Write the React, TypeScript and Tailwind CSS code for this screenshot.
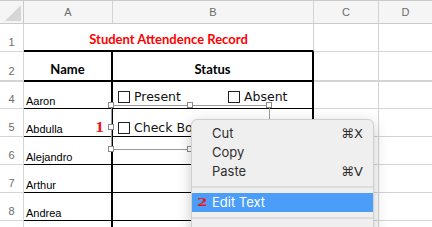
import React from "react";

const Handle = ({ x, y }: { x: string; y: string }) => (
  <div className={`absolute w-[6px] h-[6px] bg-white border border-[#8a8a8a] ${x} ${y}`} />
);

export default function App() {
  const sans = "font-['Liberation_Sans',Arial,sans-serif]";
  return (
    <div className="relative w-[432px] h-[227px] overflow-hidden bg-white">
      {/* Column header row */}
      <div className={`flex h-[24px] border-t border-b border-[#cbcbcb] bg-[#f5f5f5] text-[11px] text-[#6b6b6b] ${sans}`}>
        <div className="relative w-[24px] border-r border-[#cbcbcb]">
          <div className="absolute left-[5px] top-[4px] w-0 h-0 border-l-[16px] border-l-transparent border-b-[16px] border-b-[#d6d6d6]" />
        </div>
        <div className="w-[89px] border-r border-[#d4d4d4] flex items-center justify-center">A</div>
        <div className="w-[201px] border-r border-[#d4d4d4] flex items-center justify-center">B</div>
        <div className="w-[65px] border-r border-[#d4d4d4] flex items-center justify-center">C</div>
        <div className="flex-1 flex items-center justify-center">D</div>
      </div>

      {/* Row 1 */}
      <div className={`flex h-[28px] ${sans}`}>
        <div className="w-[24px] border-r border-b border-[#d4d4d4] flex items-end justify-center pb-[1px] text-[11px] text-[#6b6b6b]">1</div>
        <div className="w-[290px] border-r border-r-[#d4d4d4] border-b-2 border-b-black flex items-end justify-center pb-[1px] text-[13px] font-bold text-[#ff0000] font-['Lato',sans-serif]">
          Student Attendence Record
        </div>
        <div className="w-[65px] border-r border-b border-[#d4d4d4]" />
        <div className="flex-1 border-b border-[#d4d4d4]" />
      </div>

      {/* Row 2 */}
      <div className={`flex h-[30px] ${sans}`}>
        <div className="w-[24px] border-r border-b-2 border-[#d4d4d4] flex items-end justify-center pb-[1px] text-[11px] text-[#6b6b6b]">2</div>
        <div className="w-[89px] border-r-2 border-b-2 border-black flex items-end justify-center pb-[1px] text-[13px] font-bold text-black font-['Lato',sans-serif]">Name</div>
        <div className="w-[201px] border-r-2 border-b-2 border-black flex items-end justify-center pb-[1px] text-[13px] font-bold text-black font-['Lato',sans-serif]">Status</div>
        <div className="w-[65px] border-r border-b-2 border-[#d4d4d4]" />
        <div className="flex-1 border-b-2 border-[#d4d4d4]" />
      </div>

      {[
        { n: "4", name: "Aaron", h: "h-[27px]" },
        { n: "5", name: "Abdulla", h: "h-[28px]" },
        { n: "6", name: "Alejandro", h: "h-[28px]" },
        { n: "7", name: "Arthur", h: "h-[28px]" },
        { n: "8", name: "Andrea", h: "h-[28px]" },
      ].map((r) => (
        <div key={r.n} className={`flex ${r.h} ${sans}`}>
          <div className="w-[24px] border-r border-b border-[#d4d4d4] flex items-end justify-center pb-[1px] text-[11px] text-[#6b6b6b]">{r.n}</div>
          <div className="w-[89px] border-r-2 border-b border-black flex items-end pl-[2px] pb-[0px] text-[11px] text-black leading-[14px]">{r.name}</div>
          <div className="w-[201px] border-r-2 border-b border-black" />
          <div className="w-[65px] border-r border-b border-[#d4d4d4]" />
          <div className="flex-1 border-b border-[#d4d4d4]" />
        </div>
      ))}

      {/* Row 9 */}
      <div className="flex h-[20px]">
        <div className="w-[24px] border-r border-[#d4d4d4]" />
        <div className="w-[89px] border-r-2 border-black" />
        <div className="w-[201px] border-r-2 border-black" />
        <div className="w-[65px] border-r border-[#d4d4d4]" />
        <div className="flex-1" />
      </div>

      {/* Check box controls */}
      <div className="absolute left-[118px] top-[89px] h-[16px] flex items-center gap-[4px] text-[12.5px] text-[#111] font-['DejaVu_Sans',sans-serif]">
        <div className="w-[12px] h-[12px] border border-[#222] bg-white" />
        <span>Present</span>
      </div>
      <div className="absolute left-[228px] top-[89px] h-[16px] flex items-center gap-[4px] text-[12.5px] text-[#111] font-['DejaVu_Sans',sans-serif]">
        <div className="w-[12px] h-[12px] border border-[#222] bg-white" />
        <span>Absent</span>
      </div>
      <div className="absolute left-[118px] top-[120px] h-[16px] flex items-center gap-[4px] text-[12.5px] text-[#111] font-['DejaVu_Sans',sans-serif] whitespace-nowrap">
        <div className="w-[12px] h-[12px] border border-[#222] bg-white" />
        <span>Check Box 3</span>
      </div>

      {/* Selection frame */}
      <div className="absolute left-[111px] top-[105px] w-[159px] h-[45px] border border-[#9a9a9a]" />
      <Handle x="left-[108px]" y="top-[102px]" />
      <Handle x="left-[187px]" y="top-[102px]" />
      <Handle x="left-[266px]" y="top-[102px]" />
      <Handle x="left-[108px]" y="top-[124px]" />
      <Handle x="left-[266px]" y="top-[124px]" />
      <Handle x="left-[108px]" y="top-[146px]" />
      <Handle x="left-[187px]" y="top-[146px]" />
      <Handle x="left-[266px]" y="top-[146px]" />

      {/* Red marker 1 */}
      <div className="absolute left-[96px] top-[119px] text-[14px] leading-[18px] font-bold text-[#e8191c] font-['Liberation_Serif',serif] scale-x-[1.25]">1</div>

      {/* Context menu */}
      <div className="absolute left-[191px] top-[119px] w-[183px] h-[120px] rounded-[6px] bg-[#efefef] border border-[#cfcfcf] shadow-[0_4px_14px_rgba(0,0,0,0.22)] pt-[4px] text-[13px] text-[#2f2f2f] font-['Inter',sans-serif]">
        <div className="h-[19px] flex items-center justify-between pl-[20px] pr-[10px]">
          <span>Cut</span>
          <span className="font-['DejaVu_Sans',sans-serif] text-[13px]">⌘X</span>
        </div>
        <div className="h-[19px] flex items-center pl-[20px] pr-[10px]">
          <span>Copy</span>
        </div>
        <div className="h-[19px] flex items-center justify-between pl-[20px] pr-[10px]">
          <span>Paste</span>
          <span className="font-['DejaVu_Sans',sans-serif] text-[13px]">⌘V</span>
        </div>
        <div className="h-[12px] flex items-center">
          <div className="w-full h-[2px] bg-[#dcdcdc]" />
        </div>
        <div className="relative h-[19px] flex items-center pl-[20px] pr-[10px] bg-[#4b9df7] text-white">
          <span className="absolute left-[7px] top-[0px] text-[12.5px] leading-[19px] font-bold text-[#e8191c] font-['Liberation_Serif',serif] scale-x-[1.6]">2</span>
          <span>Edit Text</span>
        </div>
        <div className="h-[12px] flex items-center">
          <div className="w-full h-[2px] bg-[#dcdcdc]" />
        </div>
      </div>
    </div>
  );
}
